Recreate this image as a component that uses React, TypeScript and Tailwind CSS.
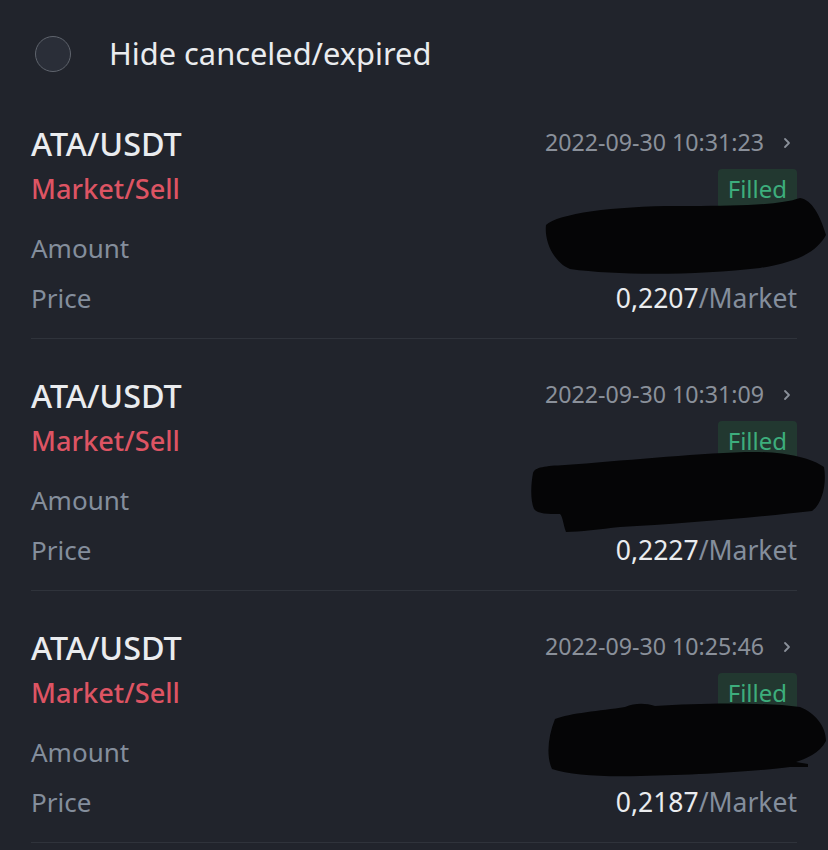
import React from "react";

type Order = {
  time: string;
  price: string;
  blob: string;
};

const orders: Order[] = [
  {
    time: "2022-09-30 10:31:23",
    price: "0,2207",
    blob: "M546,138 C558,126 620,118 690,119 C740,119 780,118 800,111 C812,113 820,128 826,148 C818,163 800,175 760,181 C700,188 620,189 570,182 C555,176 544,156 546,138 Z",
  },
  {
    time: "2022-09-30 10:31:09",
    price: "0,2227",
    blob: "M533,134 C535,128 545,127 565,126 C620,122 690,115 745,113 C780,112 810,118 824,128 C827,145 822,165 812,172 C760,178 680,185 620,188 C600,190 580,193 566,193 C563,185 563,178 560,175 C548,175 538,175 534,170 C530,160 531,145 533,134 Z",
  },
  {
    time: "2022-09-30 10:25:46",
    price: "0,2187",
    blob: "M555,128 C570,122 600,120 625,116 C635,112 645,112 655,115 C700,112 760,111 800,116 C815,122 826,135 826,150 C820,162 805,168 796,171 L808,173 L808,176 L790,176 C760,180 700,184 640,185 C600,186 570,184 552,178 C546,165 548,145 555,128 Z",
  },
];

function Chevron() {
  return (
    <svg width="8" height="12" viewBox="0 0 8 12" className="ml-[19px] mr-[6px]">
      <path d="M2 2 L6 6 L2 10" fill="none" stroke="#8a909a" strokeWidth="1.8" strokeLinecap="round" strokeLinejoin="round" />
    </svg>
  );
}

function OrderRow({ o }: { o: Order }) {
  return (
    <div className="relative pt-[36px] pb-[23px] border-b border-[#2f333b] mx-[31px]">
      <div className="h-[40px] flex items-center justify-between">
        <span className="text-[32.3px] font-medium text-[#eaecef] leading-none">ATA/USDT</span>
        <span className="flex items-center text-[23.2px] text-[#8a909a] leading-none">
          {o.time}
          <Chevron />
        </span>
      </div>
      <div className="h-[52px] flex items-center justify-between">
        <span className="text-[27.2px] font-medium text-[#dd5463] leading-none">Market/Sell</span>
        <span className="h-[40px] px-[10px] flex items-center rounded-[4px] bg-[#223830] text-[#3dae7c] text-[24px] leading-none">
          Filled
        </span>
      </div>
      <div className="h-[66px] flex items-center justify-between">
        <span className="text-[26px] text-[#848e9c] leading-none">Amount</span>
      </div>
      <div className="h-[34px] flex items-center justify-between">
        <span className="text-[26px] text-[#848e9c] leading-none">Price</span>
        <span className="text-[26.5px] leading-none">
          <span className="text-[#eaecef]">{o.price}</span>
          <span className="text-[#848e9c]">/Market</span>
        </span>
      </div>
      <svg
        className="absolute top-0 left-[-31px] pointer-events-none"
        width="828"
        height="252"
        viewBox="0 0 828 252"
      >
        <path d={o.blob} fill="#050506" />
      </svg>
    </div>
  );
}

export default function App() {
  return (
    <div
      className="w-[828px] h-[850px] bg-[#21242c] overflow-hidden"
      style={{ fontFamily: '"Noto Sans", "Open Sans", Arial, sans-serif' }}
    >
      <div className="h-[87px] pt-[20px] pl-[35px] flex items-center">
        <div className="w-[36px] h-[36px] rounded-full border-[1.5px] border-[#5f646d] bg-[#2a2e38]" />
        <span className="ml-[38px] text-[30.8px] text-[#eaecef] leading-none">Hide canceled/expired</span>
      </div>
      {orders.map((o, i) => (
        <OrderRow key={i} o={o} />
      ))}
    </div>
  );
}
